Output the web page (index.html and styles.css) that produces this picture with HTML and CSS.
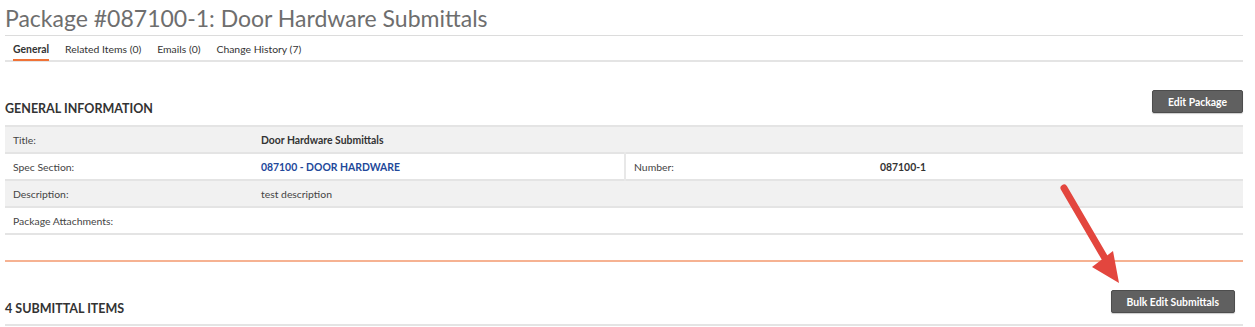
FILE: index.html
```html
<!DOCTYPE html>
<html>
  <head>
    <title>Package #087100-1: Door Hardware Submittals</title>
    <link rel="stylesheet" href="styles.css">
  </head>
  <body>
    <div class="page">
      <h1 class="page-title">Package #087100-1: Door Hardware Submittals</h1>

      <!-- Tabs -->
      <ul class="tabs">
        <li class="tab active">General</li>
        <li class="tab">Related Items (0)</li>
        <li class="tab">Emails (0)</li>
        <li class="tab">Change History (7)</li>
      </ul>

      <!-- General information -->
      <div class="section-head">
        <h2>GENERAL INFORMATION</h2>
        <button class="btn">Edit Package</button>
      </div>
      <table class="info">
        <colgroup>
          <col class="c-lbl">
          <col class="c-val">
          <col class="c-lbl2">
          <col>
        </colgroup>
        <tr class="shade">
          <td>Title:</td>
          <td class="strong" colspan="3">Door Hardware Submittals</td>
        </tr>
        <tr>
          <td>Spec Section:</td>
          <td><a href="#">087100 - DOOR HARDWARE</a></td>
          <td class="split">Number:</td>
          <td class="strong">087100-1</td>
        </tr>
        <tr class="shade">
          <td>Description:</td>
          <td colspan="3">test description</td>
        </tr>
        <tr>
          <td>Package Attachments:</td>
          <td colspan="3"></td>
        </tr>
      </table>

      <div class="divider"></div>

      <!-- Submittal items -->
      <div class="section-head">
        <h2>4 SUBMITTAL ITEMS</h2>
        <button class="btn bulk">Bulk Edit Submittals</button>
      </div>
      <div class="bottom-line"></div>

      <svg class="arrow" width="80" height="110" viewBox="0 0 80 110">
        <line x1="7" y1="7" x2="49" y2="79" stroke="#e3463e" stroke-width="7" stroke-linecap="round" />
        <polygon points="62,102 35,86 56,70" fill="#e3463e" />
      </svg>
    </div>
  </body>
</html>
```

FILE: styles.css
```css
body {
  margin: 0;
  font-family: Lato, "Open Sans", sans-serif;
  color: #444;
  background: #fff;
}

.page {
  position: relative;
  padding: 0 12px 0 5px;
}

.page-title {
  margin: 0;
  padding: 4px 0 3px;
  font-size: 23px;
  line-height: 28px;
  font-weight: 400;
  color: #6e6e6e;
  border-bottom: 1px solid #dcdcdc;
}

.tabs {
  list-style: none;
  margin: 0;
  padding: 0 0 0 8px;
  display: flex;
  gap: 16px;
  border-bottom: 2px solid #e4e4e4;
}

.tab {
  font-size: 10.4px;
  line-height: 14px;
  padding: 6px 0 3px;
  color: #333;
  border-bottom: 2px solid transparent;
  margin-bottom: -1px;
}

.tab.active {
  font-weight: 700;
  border-bottom-color: #f07236;
}

.section-head {
  display: flex;
  justify-content: space-between;
  align-items: flex-end;
  margin-top: 28px;
}

.section-head h2 {
  margin: 0 0 -4px;
  font-size: 12.5px;
  line-height: 16px;
  font-weight: 700;
  color: #333;
}

.btn {
  font-family: Lato, "Open Sans", sans-serif;
  font-size: 10.4px;
  font-weight: 700;
  color: #fff;
  background: #606060;
  border: 1px solid #4d4d4d;
  border-radius: 2px;
  height: 23px;
  padding: 0 15px;
  box-shadow: 0 1px 1px rgba(0, 0, 0, 0.2);
}

.bulk {
  margin-right: 8px;
}

.info {
  width: 100%;
  table-layout: fixed;
  margin-top: 12px;
  border-collapse: collapse;
  font-size: 10.4px;
  color: #444;
}

.c-lbl {
  width: 248px;
}

.c-val {
  width: 372px;
}

.c-lbl2 {
  width: 247px;
}

.info tr {
  border-top: 2px solid #e4e4e4;
  border-bottom: 2px solid #e4e4e4;
}

.info td {
  height: 25px;
  padding: 0 8px;
}

.shade {
  background: #f1f1f1;
}

.split {
  border-left: 2px solid #e8e8e8;
}

.strong {
  font-weight: 700;
  color: #333;
}

.info a {
  color: #22489a;
  font-weight: 700;
  text-decoration: none;
}

.divider {
  margin-top: 25px;
  height: 2px;
  background: #f6b292;
}

.bottom-line {
  margin-top: 11px;
  border-top: 2px solid #e4e4e4;
}

.arrow {
  position: absolute;
  left: 1057px;
  top: 181px;
}
```
